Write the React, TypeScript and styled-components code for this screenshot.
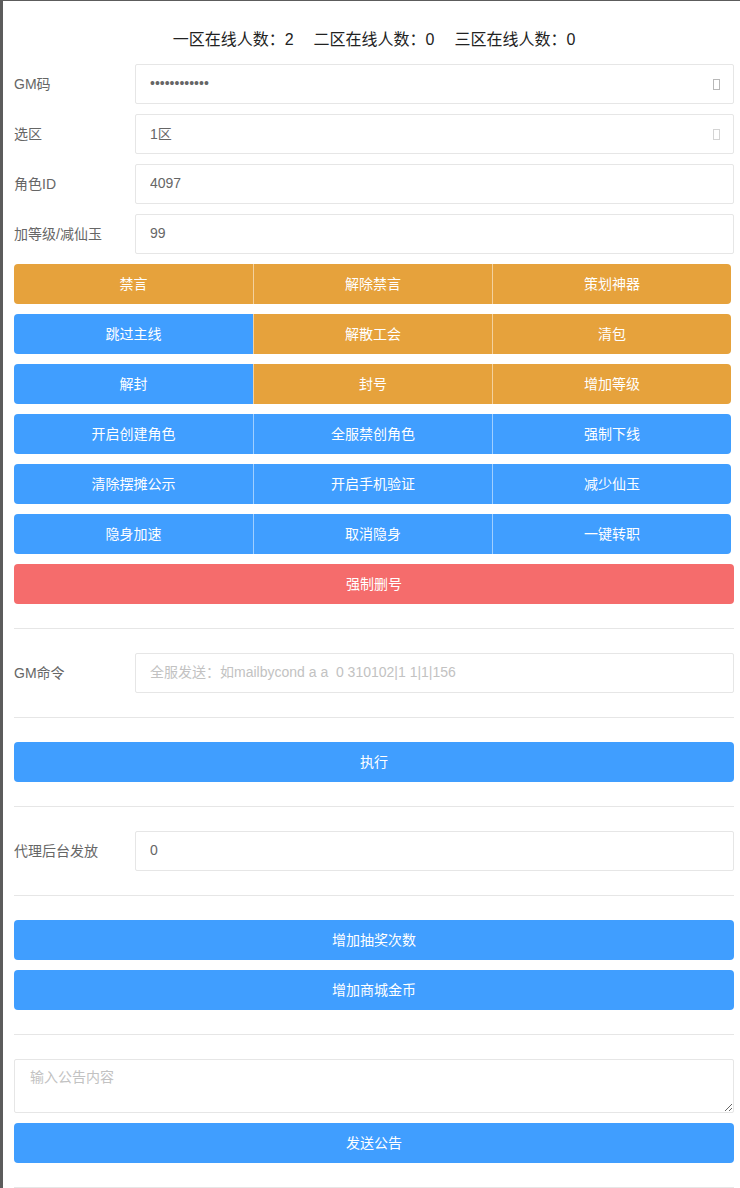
import styled, { createGlobalStyle } from 'styled-components';

const GlobalStyle = createGlobalStyle`
  html, body {
    margin: 0;
    padding: 0;
    background: #fff;
  }
  body {
    border-left: 3px solid #5c5c5c;
    border-top: 1px solid #5c5c5c;
    font-family: "Liberation Sans", "Noto Sans CJK SC", sans-serif;
    font-size: 14px;
    color: #666;
  }
  * {
    box-sizing: border-box;
  }
`;

const Page = styled.main`
  width: 720px;
  margin-left: 11px;
  padding-top: 17px;
`;

const Header = styled.div`
  height: 40px;
  margin-bottom: 6px;
  display: flex;
  justify-content: center;
  align-items: center;
  font-size: 16px;
  color: #222;
`;

const Count = styled.span`
  margin: 0 10px;
`;

const Stack = styled.div`
  display: flex;
  flex-direction: column;
  gap: 10px;
`;

const FormRow = styled.div`
  display: grid;
  grid-template-columns: 121px 1fr;
  align-items: center;
  height: 40px;
`;

const Label = styled.label`
  color: #666;
  font-size: 14px;
  padding-bottom: 2px;
`;

const Field = styled.div`
  position: relative;
  height: 40px;
`;

const TextInput = styled.input`
  width: 100%;
  height: 40px;
  border: 1px solid #e6e6e6;
  border-radius: 2px;
  padding: 0 30px 2px 14px;
  font-family: inherit;
  font-size: 14px;
  color: #666;
  background: #fff;
  outline: none;

  &::placeholder {
    color: #c2c2c2;
  }
`;

const SelectBox = styled.div`
  height: 40px;
  border: 1px solid #e6e6e6;
  border-radius: 2px;
  padding: 0 14px 2px;
  display: flex;
  align-items: center;
  color: #666;
  background: #fff;
`;

const Tofu = styled.span<{ $faint?: boolean }>`
  position: absolute;
  right: 14px;
  top: 15px;
  width: 7px;
  height: 11px;
  border: 1px solid ${(p) => (p.$faint ? '#d4d4d4' : '#b8b8b8')};
`;

const ButtonGroup = styled.div`
  display: grid;
  grid-template-columns: repeat(3, 239px);
`;

const colors = {
  primary: '#409eff',
  warning: '#e6a23c',
  danger: '#f56c6c',
};

type Kind = keyof typeof colors;

const Button = styled.button<{ $kind: Kind }>`
  height: 40px;
  border: none;
  margin: 0;
  padding: 0 18px 3px;
  background: ${(p) => colors[p.$kind]};
  color: #fff;
  font-family: inherit;
  font-size: 14px;
  border-radius: 4px;
  cursor: pointer;
`;

const GroupButton = styled(Button)`
  border-radius: 0;
  border-left: 1px solid rgba(255, 255, 255, 0.5);

  &:first-child {
    border-left: none;
    border-radius: 4px 0 0 4px;
  }
  &:last-child {
    border-radius: 0 4px 4px 0;
  }
`;

const Divider = styled.hr`
  height: 1px;
  border: none;
  background: #e6e6e6;
  margin: 24px 0;
`;

const Notice = styled.textarea`
  width: 100%;
  height: 54px;
  border: 1px solid #e6e6e6;
  border-radius: 2px;
  padding: 6px 15px;
  font-family: inherit;
  font-size: 14px;
  color: #666;
  outline: none;
  display: block;

  &::placeholder {
    color: #c2c2c2;
  }
`;

const groups: [string, Kind][][] = [
  [['禁言', 'warning'], ['解除禁言', 'warning'], ['策划神器', 'warning']],
  [['跳过主线', 'primary'], ['解散工会', 'warning'], ['清包', 'warning']],
  [['解封', 'primary'], ['封号', 'warning'], ['增加等级', 'warning']],
  [['开启创建角色', 'primary'], ['全服禁创角色', 'primary'], ['强制下线', 'primary']],
  [['清除摆摊公示', 'primary'], ['开启手机验证', 'primary'], ['减少仙玉', 'primary']],
  [['隐身加速', 'primary'], ['取消隐身', 'primary'], ['一键转职', 'primary']],
];

export default function App() {
  return (
    <>
      <GlobalStyle />
      <Page>
        <Header>
          <Count>一区在线人数：2</Count>
          <Count>二区在线人数：0</Count>
          <Count>三区在线人数：0</Count>
        </Header>

        <Stack>
          <FormRow>
            <Label>GM码</Label>
            <Field>
              <TextInput type="password" defaultValue="123456789012" />
              <Tofu />
            </Field>
          </FormRow>
          <FormRow>
            <Label>选区</Label>
            <Field>
              <SelectBox>1区</SelectBox>
              <Tofu $faint />
            </Field>
          </FormRow>
          <FormRow>
            <Label>角色ID</Label>
            <Field>
              <TextInput defaultValue="4097" />
            </Field>
          </FormRow>
          <FormRow>
            <Label>加等级/减仙玉</Label>
            <Field>
              <TextInput defaultValue="99" />
            </Field>
          </FormRow>

          {groups.map((row, i) => (
            <ButtonGroup key={i}>
              {row.map(([text, kind]) => (
                <GroupButton key={text} $kind={kind}>
                  {text}
                </GroupButton>
              ))}
            </ButtonGroup>
          ))}

          <Button $kind="danger">强制删号</Button>
        </Stack>

        <Divider />

        <FormRow>
          <Label>GM命令</Label>
          <Field>
            <TextInput placeholder={'全服发送：如mailbycond a a\u00a0 0 310102|1 1|1|156'} />
          </Field>
        </FormRow>

        <Divider />

        <Stack>
          <Button $kind="primary">执行</Button>
        </Stack>

        <Divider />

        <FormRow>
          <Label>代理后台发放</Label>
          <Field>
            <TextInput defaultValue="0" />
          </Field>
        </FormRow>

        <Divider />

        <Stack>
          <Button $kind="primary">增加抽奖次数</Button>
          <Button $kind="primary">增加商城金币</Button>
        </Stack>

        <Divider />

        <Stack>
          <Notice placeholder="输入公告内容" />
          <Button $kind="primary">发送公告</Button>
        </Stack>

        <Divider />
      </Page>
    </>
  );
}
